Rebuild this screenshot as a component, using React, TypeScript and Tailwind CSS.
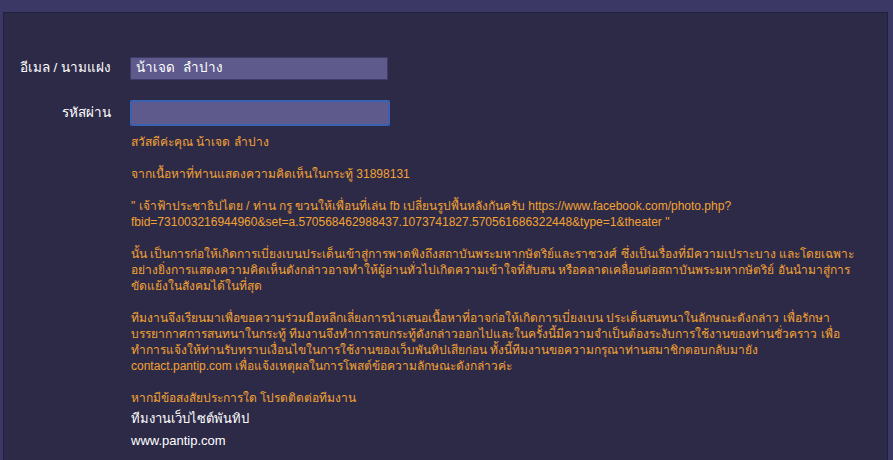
export default function App() {
  return (
    <div className="h-[460px] w-[893px] overflow-hidden bg-[#3c3866] pl-[3px] pr-[5px] pt-[12px] font-['Liberation_Sans','Noto_Sans',sans-serif]">
      <div className="h-[460px] border border-[#221f3a] bg-[#2d2a48] pt-[44px]">
        <div className="flex items-center">
          <label className="w-[107px] text-right text-[13.5px] text-white">อีเมล / นามแฝง</label>
          <div className="ml-[19px] flex h-[23px] w-[258px] items-center border border-[#3f3b66] bg-[#5e5a8c] px-[5px] text-[13.5px] text-white">
            น้าเจด&nbsp; ลำปาง
          </div>
        </div>
        <div className="mt-[20px] flex items-center">
          <label className="w-[107px] text-right text-[13.5px] text-white">รหัสผ่าน</label>
          <div className="ml-[19px] h-[26px] w-[260px] rounded-[2px] border-2 border-[#3b62b0] bg-[#5e5a8c]" />
        </div>
        <div className="ml-[127px] mt-[8px] whitespace-nowrap text-[12px] leading-[16px] text-[#f2a232]">
          <p>สวัสดีค่ะคุณ น้าเจด ลำปาง</p>
          <p className="mt-[16px]">จากเนื้อหาที่ท่านแสดงความคิดเห็นในกระทู้ 31898131</p>
          <p className="mt-[16px]">
            " เจ้าฟ้าประชาธิปไตย / ท่าน กรู ขวนให้เพื่อนที่เล่น fb เปลี่ยนรูปพื้นหลังกันครับ https://www.facebook.com/photo.php?
            <br />
            fbid=731003216944960&amp;set=a.570568462988437.1073741827.570561686322448&amp;type=1&amp;theater "
          </p>
          <p className="mt-[16px]">
            นั้น เป็นการก่อให้เกิดการเบี่ยงเบนประเด็นเข้าสู่การพาดพิงถึงสถาบันพระมหากษัตริย์และราชวงศ์ ซึ่งเป็นเรื่องที่มีความเปราะบาง และโดยเฉพาะ
            <br />
            อย่างยิ่งการแสดงความคิดเห็นดังกล่าวอาจทำให้ผู้อ่านทั่วไปเกิดความเข้าใจที่สับสน หรือคลาดเคลื่อนต่อสถาบันพระมหากษัตริย์ อันนำมาสู่การ
            <br />
            ขัดแย้งในสังคมได้ในที่สุด
          </p>
          <p className="mt-[16px]">
            ทีมงานจึงเรียนมาเพื่อขอความร่วมมือหลีกเลี่ยงการนำเสนอเนื้อหาที่อาจก่อให้เกิดการเบี่ยงเบน ประเด็นสนทนาในลักษณะดังกล่าว เพื่อรักษา
            <br />
            บรรยากาศการสนทนาในกระทู้ ทีมงานจึงทำการลบกระทู้ดังกล่าวออกไปและในครั้งนี้มีความจำเป็นต้องระงับการใช้งานของท่านชั่วคราว เพื่อ
            <br />
            ทำการแจ้งให้ท่านรับทราบเงื่อนไขในการใช้งานของเว็บพันทิปเสียก่อน ทั้งนี้ทีมงานขอความกรุณาท่านสมาชิกตอบกลับมายัง
            <br />
            contact.pantip.com เพื่อแจ้งเหตุผลในการโพสต์ข้อความลักษณะดังกล่าวค่ะ
          </p>
          <p className="mt-[16px]">หากมีข้อสงสัยประการใด โปรดติดต่อทีมงาน</p>
          <p className="mt-[4px] text-[13px] leading-[18px] text-white">ทีมงานเว็บไซต์พันทิป</p>
          <p className="mt-[4px] text-[13px] leading-[18px] text-white">www.pantip.com</p>
        </div>
      </div>
    </div>
  );
}
